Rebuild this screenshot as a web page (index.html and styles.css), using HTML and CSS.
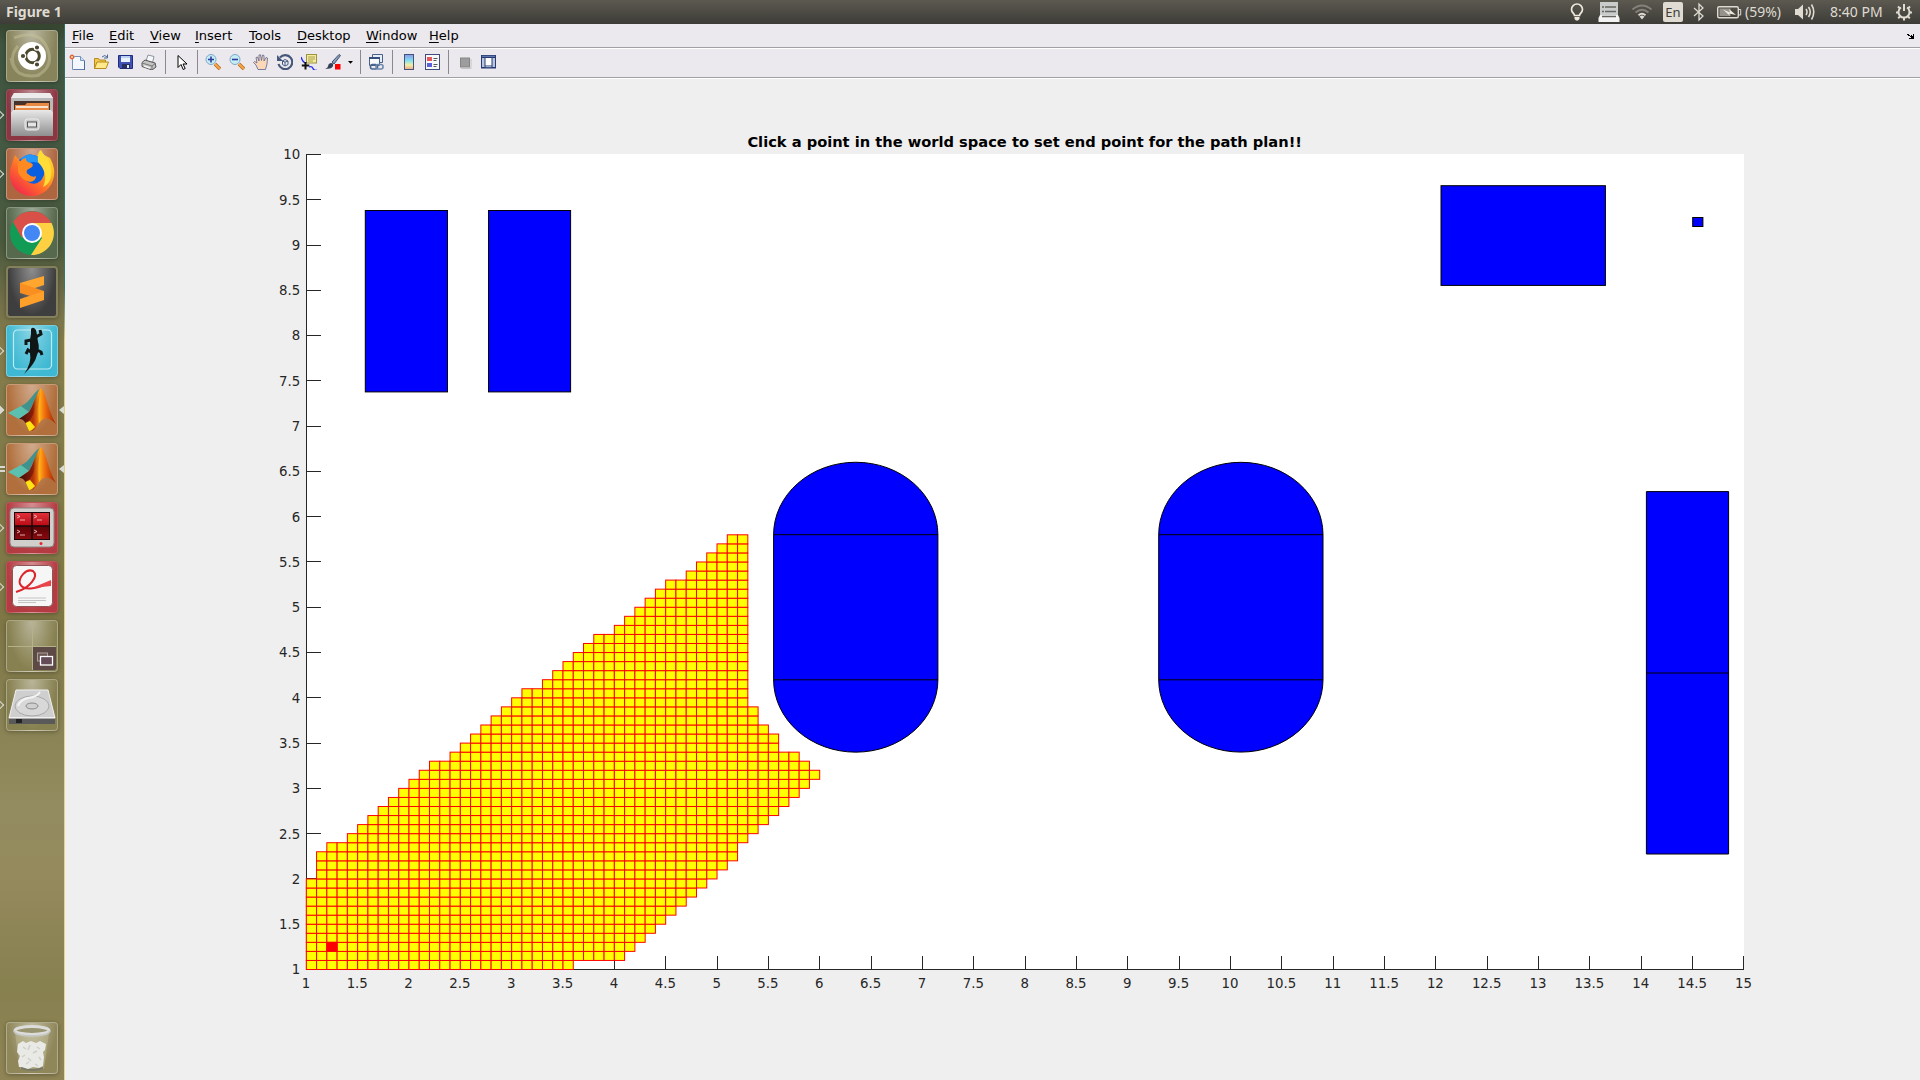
FILE: index.html
```html
<!DOCTYPE html>
<html lang="en">
<head>
<meta charset="utf-8">
<title>Figure 1</title>
<link rel="stylesheet" href="styles.css">
</head>
<body>
<svg class="defs" width="0" height="0" aria-hidden="true">
  <defs>
    <linearGradient id="steel" x1="0" y1="0" x2="0" y2="1"><stop offset="0" stop-color="#e8e8e8"/><stop offset="1" stop-color="#8f8f8f"/></linearGradient>
    <linearGradient id="ffx" x1="1" y1="0" x2="0.2" y2="1"><stop offset="0" stop-color="#fff04a"/><stop offset=".35" stop-color="#ffb21f"/><stop offset=".65" stop-color="#ff6a2a"/><stop offset="1" stop-color="#f0244f"/></linearGradient>
    <linearGradient id="flame" x1="0" y1="0" x2="1" y2="0"><stop offset="0" stop-color="#3a0d0a"/><stop offset=".38" stop-color="#8c1e08"/><stop offset=".55" stop-color="#ffb21a"/><stop offset=".68" stop-color="#f4740e"/><stop offset="1" stop-color="#9c1d06"/></linearGradient>
    <linearGradient id="cbar" x1="0" y1="0" x2="0" y2="1"><stop offset="0" stop-color="#8b97e8"/><stop offset=".4" stop-color="#82dff0"/><stop offset=".7" stop-color="#f3f0a0"/><stop offset="1" stop-color="#f0a58c"/></linearGradient>
    <linearGradient id="redscreen" x1="0" y1="0" x2="0" y2="1"><stop offset="0" stop-color="#e0303a"/><stop offset=".5" stop-color="#b80a12"/><stop offset=".52" stop-color="#5a0206"/><stop offset="1" stop-color="#870a0e"/></linearGradient>
    <symbol id="matlab" viewBox="0 0 52 52">
      <path d="M2 29 15 22 23 28 13 35Z" fill="#5cc0b0"/>
      <path d="M15 22C24 19 27 8 34 5L23 28Z" fill="#3f938f"/>
      <path d="M13 35 23 28C27 22 31 7 35 4 40 8 42 27 50 40 41 31 36 34 32 41 29 46 26 47 23 47 21 41 18 34 13 35Z" fill="url(#flame)"/>
      <path d="M34 5C31 20 29 29 24 36L20 38C23 43 22 46 24 47 28 47 31 43 33 39 29 28 34 17 34 5Z" fill="#e8520b" opacity=".45"/>
      <path d="M19.500 39 24 37 29 43C26 46 25 47 23 47Z" fill="#ffe414"/>
    </symbol>
  </defs>
</svg>

<header class="topbar">
  <span class="topbar-title">Figure 1</span>
  <div class="indicators">
    <svg class="ind w20" viewBox="0 0 20 24"><path d="M7.500 15.500C7.500 13.500 4.500 12.500 4.500 9.500A5.500 5.500 0 0 1 15.500 9.500C15.500 12.500 12.500 13.500 12.500 15.500Z" fill="none" stroke="#eee9dc" stroke-width="1.700"/><path d="M7.500 17h5v2l-1.500 1.500h-2L7.500 19Z" fill="#eee9dc"/></svg>
    <svg class="ind w24" viewBox="0 0 24 24"><path d="M3 2h18v13H3Z" fill="#c9cccb"/><path d="M3 15h18l1.500 3v4h-21v-4Z" fill="#f2f3f2"/><path d="M5 7h2M5 11.500h2M8 7h11M8 11.500h11M5 16.500h14" stroke="#65645f" stroke-width="1.300"/></svg>
    <svg class="ind w22" viewBox="0 0 22 24" fill="none" stroke-width="1.800"><path d="M1.500 9.500Q11 1.500 20.500 9.500M4.500 12.500Q11 7 17.500 12.500" stroke="#85827a"/><path d="M7.500 15.200Q11 12.300 14.500 15.200" stroke="#dfdbd2"/><path d="M8.500 16.500Q11 14.500 13.500 16.500L11 19.500Z" fill="#dfdbd2"/></svg>
    <span class="lang">En</span>
    <svg class="ind w18" viewBox="0 0 18 24"><path d="M4 8 13 16 9 20V4L13 8 4 16" fill="none" stroke="#dfdbd2" stroke-width="1.300"/></svg>
    <svg class="ind w26" viewBox="0 0 26 24"><rect x="1.700" y="6.700" width="20.600" height="11" rx="1.500" fill="none" stroke="#dfdbd2" stroke-width="1.400"/><path d="M23 9.500h1.700v5.500H23" fill="none" stroke="#dfdbd2"/><rect x="3.500" y="8.500" width="11" height="7.500" fill="#96938c"/><path d="M7 9.500 14 12.500 13 9 20 15 13 13.500 14 16Z" fill="#eeeadf"/></svg>
    <span class="battery">(59%)</span>
    <svg class="ind w22" viewBox="0 0 22 24"><path d="M1 9h3l5-4.500v15L4 15H1Z" fill="#dfdbd2"/><path d="M12 9q2 3 0 6M14.500 7q3.500 5 0 10M17.500 4.500q4.500 7.500 0 15" fill="none" stroke="#dfdbd2" stroke-width="1.600"/></svg>
    <span class="clock">8:40 PM</span>
    <svg class="ind w20" viewBox="0 0 20 24"><path d="M7 7.500A5.500 5.500 0 1 0 13 7.500" fill="none" stroke="#dfdbd2" stroke-width="2"/><path d="M10 4v7M2 12.500h2.500M15.500 12.500H18M4.200 18.300 6 16.500M15.800 18.300 14 16.500M10 18v2.500M4 6.500 6 8.500M16 6.500 14 8.500" stroke="#dfdbd2" stroke-width="2"/></svg>
  </div>
</header>

<div class="desktop">
  <nav class="launcher">
    <div class="tile dash">
      <svg viewBox="0 0 52 52"><path d="M8 8Q34-2 42 20 48 38 30 46M5 28Q8 50 34 45M14 44Q0 30 12 16" fill="none" stroke="#c9c69b" stroke-width="3" opacity=".45"/><circle cx="26" cy="26" r="14" fill="#fff"/><circle cx="26.500" cy="26" r="6.800" fill="none" stroke="#4b4a31" stroke-width="3"/><g stroke="#fff" stroke-width="1.200" fill="#4b4a31"><circle cx="17" cy="26" r="2.700"/><circle cx="31" cy="17.500" r="2.700"/><circle cx="31" cy="34.500" r="2.700"/></g></svg>
    </div>
    <div class="tile files">
      <i class="pip"></i>
      <svg viewBox="0 0 52 52"><path d="M8 4h36l3 5v38H5V9Z" fill="#b9b9b9"/><path d="M8 4h36l3 5H5Z" fill="#ececec"/><path d="M8 12h36v10H8Z" fill="#45332b"/><path d="M9 16h10l2-2h22v8H9Z" fill="#e98a44"/><path d="M10 18h32" stroke="#fff" stroke-width="1.500"/><path d="M7 21h38l2 3v23H5V24Z" fill="url(#steel)"/><rect x="19" y="30" width="14" height="11" rx="2.500" fill="#c9c9c9" stroke="#eee"/><rect x="21.500" y="33" width="9" height="5" fill="#e6e6e6" stroke="#555"/></svg>
    </div>
    <div class="tile firefox">
      <i class="pip"></i>
      <svg viewBox="0 0 52 52"><path d="M9 7C11 10 13 12 15 12L32 14 31 8 34 2 38 7 44 10C47 16 49 21 48 28 46 40 37 48 26 48 12 48 3 37 4 24 5 17 7 13 9 7Z" fill="url(#ffx)"/><path d="M13 12Q24 2 34 10 40 17 38 27 34 38 24 35 17 32 18 24 20 18 13 12Z" fill="#0a5fe0"/><path d="M14 11Q23 3 32 9L36 17Q29 12 23 15Z" fill="#2497f8"/><path d="M12 16Q15 11 20 10 19 14 25 15 28 16 26 19L21 22Q20 25 22 26 26 30 30 28 30 33 24 34 15 32 12 24Z" fill="#ff8a22"/><path d="M35 2C38 9 43 9 45 20 47 31 42 37 37 39 42 29 38 20 32 14Q31 7 35 2Z" fill="#ffdc38"/></svg>
    </div>
    <div class="tile chrome">
      <svg viewBox="0 0 52 52"><circle cx="26" cy="26" r="22" fill="#129b55"/><path d="M7 15A22 22 0 0 1 45.500 16H26L16 31Z" fill="#d95048"/><path d="M26 16H45.500A22 22 0 0 1 25 48L36 31Z" fill="#ffd041"/><circle cx="26" cy="26" r="10" fill="#fff"/><circle cx="26" cy="26" r="8" fill="#4387f5"/></svg>
    </div>
    <div class="tile sublime">
      <svg viewBox="0 0 52 52"><path d="M14 17 38 10v9l-24 8Z" fill="#ffa62f"/><path d="M14 17 38 25v9L14 27Z" fill="#f98f20"/><path d="M14 33 38 25v9L14 42Z" fill="#ffa02a"/></svg>
    </div>
    <div class="tile lizard">
      <i class="pip"></i>
      <svg viewBox="0 0 52 52"><rect x="7.500" y="5" width="38" height="39" rx="4" fill="none" stroke="#bdebf3" stroke-width="1.200"/><path d="M25 4Q27 1 30 5L31 10 32 17Q34 23 31 30 29 39 18 49 26 38 24 28L24 15 25 9Z" fill="#101616"/><path d="M30 12 35 9 34 5M25 15 20 16 20 20M31 25 35 27 36 30M25 27 22 25 20 29" fill="none" stroke="#101616" stroke-width="3"/></svg>
    </div>
    <div class="tile matlab"><i class="pip solid"></i><svg viewBox="0 0 52 52"><use href="#matlab"/></svg><i class="focus"></i></div>
    <div class="tile matlab"><i class="pip double"></i><svg viewBox="0 0 52 52"><use href="#matlab"/></svg><i class="focus"></i></div>
    <div class="tile terminal">
      <i class="pip"></i>
      <svg viewBox="0 0 52 52"><rect x="4" y="6" width="44" height="39" rx="4" fill="#d0cfcb" stroke="#858380"/><rect x="8" y="10" width="36" height="28" fill="#16080a"/><rect x="9" y="11" width="34" height="26" fill="url(#redscreen)"/><path d="M26 11v26M9 24h34" stroke="#18090a" stroke-width="1.500"/><path d="M11 13l3 1.500-3 1.500M14 18h5M28 13l3 1.500-3 1.500M31 18h5M11 28l3 1.500-3 1.500M14 33h5M28 28l3 1.500-3 1.500M31 33h5" fill="none" stroke="#f2cfcf" stroke-width=".8"/><circle cx="35" cy="41.500" r="1.500" fill="#e4272d"/></svg>
    </div>
    <div class="tile reader">
      <i class="pip"></i>
      <svg viewBox="0 0 52 52"><rect x="6.500" y="4.500" width="40" height="41" rx="4" fill="#f6f6f6" stroke="#8d5555"/><path d="M10 31C24 27 33 15 27 10 20 7 12 17 14 23 18 31 33 27 45 21" fill="none" stroke="#dc242c" stroke-width="2"/><path d="M26 27 45 19v6Z" fill="#e9444b"/><path d="M12 37h28M12 39.500h28M12 41.500h18" stroke="#c4c4c4"/></svg>
    </div>
    <div class="tile spaces">
      <svg viewBox="0 0 52 52"><path d="M27 27h23v21q0 2-2 2H27Z" fill="#5d4a46"/><path d="M2 26.500h48M26.500 2v48" stroke="#b5b189"/><rect x="31.500" y="33" width="10" height="8" fill="#6b5551" stroke="#aaa19b"/><rect x="34.500" y="36.500" width="12" height="8.500" fill="#644b58" stroke="#fff" stroke-width="1.300"/></svg>
    </div>
    <div class="tile disk">
      <i class="pip"></i>
      <svg viewBox="0 0 52 52"><path d="M10 11h32l7 28H3Z" fill="#cfcfcf" stroke="#f2f2f2"/><path d="M3 39h46v6H3Z" fill="#595959"/><path d="M3 39h46" stroke="#fff"/><path d="M10 40h6v4h-6Z" fill="#222"/><ellipse cx="26" cy="27" rx="17" ry="10" fill="#d8d8d8" stroke="#aaa"/><ellipse cx="26" cy="27" rx="6" ry="3" fill="#d0d0d0" stroke="#888"/><path d="M34 13Q31 18 22 19 14 21 12 27" fill="none" stroke="#f4f4f4" stroke-width="2"/></svg>
    </div>
    <div class="tile trash">
      <svg viewBox="0 0 52 52"><path d="M9 11h34l-5 36H14Z" fill="#d9d6b4" opacity=".3"/><path d="M15 46q11 4 22 0" stroke="#777867" stroke-width="2" fill="none"/><path d="M12 22l5-3 3 2 5-2 5 2 4-2 6 3-1 6-2 2 1 5-1 9-4 2-6-1-5 2-6-2-3 0-1-6 2-5-3-4Z" fill="#e9e9e5"/><path d="M17 25l3 2M24 23l-2 5M31 25l3 2M27 31l4-2M16 35l3-2M22 36l3 3M33 35l2 3M20 42l3-2M29 42l3 2" fill="none" stroke="#cfcfca" stroke-width="1.500"/><ellipse cx="26" cy="8.500" rx="17" ry="4" fill="#98946f" stroke="#dcdcda" stroke-width="3"/><path d="M8 9q2 5 18 5t18-5" fill="none" stroke="#c5c5c2" stroke-width="2"/></svg>
    </div>
  </nav>

  <main class="window">
    <div class="menubar">
      <span><u>F</u>ile</span><span><u>E</u>dit</span><span><u>V</u>iew</span><span><u>I</u>nsert</span><span><u>T</u>ools</span><span><u>D</u>esktop</span><span><u>W</u>indow</span><span><u>H</u>elp</span>
      <svg class="dock-arrow" viewBox="0 0 7 5" shape-rendering="crispEdges"><path d="M0 0h2v1h1v1h1v-1h1v1h1V0h1v5H2V4h2V3H3V2H1V1H0Z"/></svg>
    </div>
    <div class="toolbar">
      <svg class="tool" viewBox="0 0 16 16"><path d="M3.500 2.500h8l4 4v9h-12Z" fill="#f2f8fe" stroke="#7793bb"/><path d="M11.500 2.500v4h4" fill="#cfdff2" stroke="#7793bb"/><path d="M15.500 7v9H5" fill="none" stroke="#4d6b98"/><path d="M3 0v6M0 3h6M1 1l4 4M5 1 1 5" stroke="#e08a6a"/><circle cx="3" cy="3" r="1.500" fill="#fff0b8" stroke="#d8542a"/></svg>
      <svg class="tool" viewBox="0 0 16 16"><path d="M1.500 14.500v-10h4l1 1.500h6v8.500Z" fill="#f3c84b" stroke="#b58a20"/><path d="M1.500 14.500 4 8h11.500L13 14.500Z" fill="#ffe98a" stroke="#b58a20"/><path d="M9 3q3-3 5 0M14.500.5V4H11" fill="none" stroke="#456a95"/></svg>
      <svg class="tool" viewBox="0 0 16 16"><path d="M1.500 1.500h14v13H3l-1.500-1.500Z" fill="#4053b5" stroke="#202c80"/><path d="M4 2h9v6H4Z" fill="#e9f2fc"/><path d="M4 2h9v2H4Z" fill="#bcd0f0"/><path d="M5 10h8v4.500H5Z" fill="#26305c"/><path d="M10 11h2v3h-2Z" fill="#e8e8ef"/></svg>
      <svg class="tool" viewBox="0 0 16 16"><path d="M5 7 7 1l6 1.500-1.500 6Z" fill="#f6f9fc" stroke="#8c949c"/><path d="M1 8.500 4 6l10 3 1 4-4 3L1 12.500Z" fill="#c4c4c4" stroke="#555"/><path d="M1 9l10 3v3.500M11 12l4-3" fill="none" stroke="#777"/><path d="M3 12l6 2" stroke="#f4f4f4" stroke-width="1.500"/></svg>
      <i class="sep"></i>
      <svg class="tool" viewBox="0 0 16 16"><path d="M5 1.500v12l3-3 2.200 5 2-1-2.200-4.500h4Z" fill="#fff" stroke="#000"/></svg>
      <i class="sep"></i>
      <svg class="tool" viewBox="0 0 16 16"><path d="M10 10l5 5" stroke="#b7651c" stroke-width="3.500"/><path d="M10 10l5 5" stroke="#f5a848" stroke-width="2"/><circle cx="6" cy="5.500" r="5" fill="#c4edf6" stroke="#7fa7c9"/><path d="M3 5.500h6M6 2.500v6" stroke="#2e3c9c" stroke-width="1.600"/></svg>
      <svg class="tool" viewBox="0 0 16 16"><path d="M10 10l5 5" stroke="#b7651c" stroke-width="3.500"/><path d="M10 10l5 5" stroke="#f5a848" stroke-width="2"/><circle cx="6" cy="5.500" r="5" fill="#c4edf6" stroke="#7fa7c9"/><path d="M3 5.500h6" stroke="#2e3c9c" stroke-width="1.600"/></svg>
      <svg class="tool" viewBox="0 0 16 16"><path d="M5 15.500 3 11 .5 8.500 1.500 7.500 4 9 3 3.500 4.500 3 6 7 6 1 7.500.8 8.500 6.500 9.500 1 11 1.500 11 7 13 3.500 14.500 4 14 10 12.500 15.500Z" fill="#fbd9b8" stroke="#5a6390" stroke-width=".8"/></svg>
      <svg class="tool" viewBox="0 0 16 16"><path d="M3 3.500A7 7 0 1 1 1.500 10" fill="none" stroke="#45587c" stroke-width="2.200"/><path d="M0 1v6h6Z" fill="#45587c"/><path d="M5.500 7 8 5.500 11 7v3.500L8 12 5.500 10.500ZM5.500 7 8 8.200 11 7M8 8.200V12" fill="#edf1f8" stroke="#45587c"/></svg>
      <svg class="tool" viewBox="0 0 16 16"><rect x="5.500" y=".5" width="10" height="8.500" fill="#f4eb9d" stroke="#9c9340"/><path d="M7 3h7M7 5h7M7 7h5" stroke="#a9a052"/><path d="M0 3q1 4 4 6M8 13q3-1 4 1.500t4 1.500" fill="none" stroke="#1c26ee" stroke-width="1.200"/><path d="M4.500 8v7.500M.8 11.500h7.500" stroke="#111" stroke-width="2"/></svg>
      <svg class="tool" viewBox="0 0 16 16"><path d="M7 8 14 .5l1.500 1L9 10Z" fill="#8ba0c0" stroke="#41536e"/><path d="M0 15q3-1 3.500-4.500Q5 8 8 9.500 9 13 5 14.500Z" fill="#334058"/><rect x="10" y="10" width="5.500" height="5.500" fill="#f00"/></svg>
      <svg class="caret" viewBox="0 0 11 16"><path d="M3 7h5L5.500 9.700Z"/></svg>
      <i class="sep"></i>
      <svg class="tool" viewBox="0 0 16 16"><path d="M4.500.500h10v8h-10Z" fill="#e6edf6" stroke="#4b6288"/><path d="M1.500 3.500h10v8h-10Z" fill="#f8fafc" stroke="#4b6288"/><path d="M1 3h11v2H1Z" fill="#35507d"/><rect x="2.500" y="10.500" width="7" height="4.500" rx="2" fill="none" stroke="#49658e" stroke-width="1.600"/><rect x="8" y="10.500" width="7" height="4.500" rx="2" fill="none" stroke="#6e88ad" stroke-width="1.600"/></svg>
      <i class="sep"></i>
      <svg class="tool" viewBox="0 0 16 16"><rect x="4.500" y=".5" width="9" height="15" fill="url(#cbar)" stroke="#42547a"/></svg>
      <svg class="tool" viewBox="0 0 16 16"><rect x="1.500" y=".5" width="14" height="15" fill="#f7f8fc" stroke="#3e4c79"/><rect x="3" y="3" width="5" height="4" fill="#e9575c"/><rect x="3" y="9" width="5" height="4" fill="#5960de"/><path d="M9.500 4.500h4M9.500 6.500h3M9.500 10.500h4M9.500 12.500h3" stroke="#555"/></svg>
      <i class="sep"></i>
      <svg class="tool" viewBox="0 0 16 16"><rect x="4.500" y="4" width="9" height="9" fill="#9d9d9d" stroke="#858585"/><path d="M5 14.500h10V5" fill="none" stroke="#c4c4c4"/></svg>
      <svg class="tool" viewBox="0 0 16 16"><rect x="1" y="1" width="15" height="13.500" fill="#263b73"/><path d="M2 4h2.500v9H2ZM12.500 4H15v9h-2.500Z" fill="#b9c6dd"/><rect x="5.500" y="4" width="6" height="7.500" fill="#fff"/><path d="M2 2.300h13" stroke="#6f87b8"/><path d="M5.500 12.700h6" stroke="#b9c6dd"/></svg>
    </div>
    <div class="figure">
      <svg id="axes" class="axes" width="1855" height="1001" viewBox="65 79 1855 1001">
        <rect x="306" y="154" width="1438" height="816" fill="#fff"/>
        <text class="title" x="1024.700" y="146.500" text-anchor="middle">Click a point in the world space to set end point for the path plan!!</text>
        <g id="rulers" class="rulers"></g>
        <g id="cells" class="cells"></g>
        <g class="obstacles">
          <rect x="365.300" y="210.500" width="82.200" height="181.400"/>
          <rect x="488.500" y="210.500" width="82.100" height="181.400"/>
          <rect x="1441" y="185.700" width="164.400" height="99.700"/>
          <rect x="1692.700" y="217.500" width="10.200" height="9"/>
          <path d="M773.600 534.700a82.150 72.450 0 0 1 164.300 0v145a82.150 72.450 0 0 1-164.300 0ZM773.600 534.700h164.300M773.600 679.800h164.300"/>
          <path d="M1158.700 534.700a82.150 72.450 0 0 1 164.300 0v145a82.150 72.450 0 0 1-164.300 0ZM1158.700 534.700h164.300M1158.700 679.800h164.300"/>
          <path d="M1646.400 491.600h82.200v362.400h-82.200ZM1646.400 673h82.200"/>
        </g>
      </svg>
    </div>
  </main>
</div>
<script src="plot.js"></script>
</body>
</html>
```
FILE: styles.css
```css
* { box-sizing: border-box; }

body {
  margin: 0;
  width: 1920px;
  height: 1080px;
  overflow: hidden;
  display: flex;
  flex-direction: column;
  background: #efefef;
  font-family: "DejaVu Sans", sans-serif;
}

.defs { position: absolute; }

.topbar {
  flex: 0 0 24px;
  display: flex;
  justify-content: space-between;
  align-items: center;
  padding: 0 6px;
  background: linear-gradient(#5c5a50, #55534b 20%, #3d3c37);
  color: #dfdbd2;
  font-family: "Noto Sans", "Open Sans", sans-serif;
  font-size: 14px;
  line-height: 24px;
}
.topbar-title { font-weight: 700; font-size: 14px; }
.indicators { display: flex; align-items: center; height: 24px; }
.ind { height: 24px; display: block; }
.w18 { width: 18px; margin-right: 8px; }
.w20 { width: 20px; }
.w22 { width: 22px; margin-right: 10px; }
.w24 { width: 24px; margin: 0 10px 0 10px; }
.w26 { width: 26px; margin-right: 2px; }
.lang {
  width: 20px;
  height: 20px;
  margin-right: 7px;
  border-radius: 2px;
  background: #dfdbd2;
  color: #3d3c37;
  font-size: 13px;
  line-height: 20px;
  text-align: center;
}
.battery { width: 49px; margin-left: 1px; white-space: nowrap; }
.clock { width: 64px; margin-left: 4px; white-space: nowrap; }

.desktop { flex: 1; display: flex; min-height: 0; }

.launcher {
  flex: 0 0 65px;
  display: flex;
  flex-direction: column;
  gap: 7px;
  padding: 6px 6px 6px;
  border-right: 1px solid;
  border-image: linear-gradient(#2f6a62, #3c7468 25%, #e0cb84 30%, #e8d590) 1;
  background: linear-gradient(#35452f 0, #3f5540 20px, #465a43 150px, #4b5a3d 220px, #77724a 285px, #857c4c 320px, #7e7645 600px, #928c60 780px, #958a5e 850px, #87804f 960px, #8f8455 1056px);
}
.tile {
  flex: 0 0 52px;
  width: 52px;
  height: 52px;
  position: relative;
  border-radius: 4px;
  border: 1px solid rgba(255, 255, 255, .3);
  background-image: radial-gradient(ellipse at 50% 0, rgba(255, 255, 255, .42), rgba(255, 255, 255, 0) 70%);
  box-shadow: 0 1px 4px rgba(0, 0, 0, .3);
}
.tile svg { display: block; width: 52px; height: 52px; margin: -1px; }
.dash { background-color: #87835b; }
.files { background-color: #8c3642; border-color: rgba(255, 255, 255, .12); }
.firefox { background-color: #ae6640; }
.chrome { background-color: #57694d; }
.sublime { background-color: #3e3e3e; border: 2px solid #85805c; }
.sublime svg { margin: -2px; }
.lizard { background-color: #3fb9d3; }
.matlab { background-color: #b06f3c; }
.terminal, .reader { background-color: #b43b42; border-color: rgba(255, 255, 255, .12); }
.spaces, .disk { background-color: #878050; }
.trash { background-color: #8f875a; margin-top: auto; }

.pip {
  position: absolute;
  left: -10px;
  top: 22px;
  width: 6px;
  height: 6px;
  border: solid #d8d8d0;
  border-width: 1px 1px 0 0;
  transform: rotate(45deg);
}
.pip.solid { background: #d8d8d0; }
.pip.double {
  left: -7px;
  width: 5px;
  height: 6px;
  border-width: 2px 0;
  transform: none;
}
.focus {
  position: absolute;
  right: -7px;
  top: 21px;
  border: solid transparent;
  border-width: 4px 5px 4px 0;
  border-right-color: #dadad4;
}

.window { flex: 1; display: flex; flex-direction: column; min-width: 0; }

.menubar {
  flex: 0 0 25px;
  display: grid;
  grid-template-columns: 37px 41px 45px 54px 48px 69px 63px 1fr 7px;
  align-items: center;
  padding: 1px 6px 1px 7px;
  background: #ebe9ed;
  border-bottom: 1px solid #fff;
  box-shadow: inset 0 -1px #a2a0a4;
  color: #000;
  font-size: 13px;
  line-height: 22px;
}
.menubar u { text-decoration-thickness: 1px; text-underline-offset: 2px; }
.dock-arrow { width: 7px; height: 5px; }

.toolbar {
  flex: 0 0 30px;
  display: flex;
  align-items: center;
  padding-bottom: 3px;
  background: #ebe9ed;
  border-bottom: 1px solid #fff;
  box-shadow: inset 0 -1px #a2a0a4;
}
.tool { width: 16px; height: 16px; margin: 0 4px; flex: none; }
.sep { width: 1px; height: 24px; margin: 0 3px 0 4px; background: #8b898d; flex: none; }
.caret { width: 11px; height: 16px; flex: none; }

.figure { flex: 1; background: #efefef; min-height: 0; }
.axes { display: block; }
.axes text { font-family: "DejaVu Sans", sans-serif; }
.title { font-size: 14.65px; font-weight: 700; fill: #000; }
.rulers { font-size: 13.33px; fill: #262626; }
.rulers path { fill: none; stroke: #262626; stroke-width: 1; shape-rendering: crispEdges; }
.cells rect { fill: #ff0; stroke: #f00; stroke-width: 1; }
.cells .start { fill: #f00; }
.obstacles { fill: #00f; stroke: #000; stroke-width: 1; }
```
FILE: plot.js
```js
const NS = "http://www.w3.org/2000/svg";
const X0 = 306.3, Y0 = 969.5, SX = 102.68, SY = 90.56;
const px = v => X0 + (v - 1) * SX;
const py = v => Y0 - (v - 1) * SY;

function add(parent, name, attrs, text) {
  const el = document.createElementNS(NS, name);
  for (const key in attrs) el.setAttribute(key, attrs[key]);
  if (text !== undefined) el.textContent = text;
  parent.appendChild(el);
  return el;
}

const rulers = document.getElementById("rulers");
let d = "M306.5 154V969.5H1744";
for (let v = 1; v <= 15; v += 0.5) {
  const x = Math.floor(px(v)) + 0.5;
  d += `M${x} 956V969.5`;
  add(rulers, "text", { x: px(v) - 0.4, y: 988, "text-anchor": "middle" }, v);
}
for (let v = 1; v <= 10; v += 0.5) {
  const y = Math.floor(py(v)) + 0.5;
  d += `M306.5 ${y}H321`;
  add(rulers, "text", { x: 300.3, y: Math.round(py(v) + 4.9), "text-anchor": "end" }, v);
}
add(rulers, "path", { d });

// Explored cells, bottom row first: [first column, end column], 0.1 units each.
const rows = [
  [0, 26], [0, 31], [0, 32], [0, 33], [0, 34], [0, 35], [0, 36], [0, 37],
  [0, 38], [0, 39], [1, 40], [1, 41], [1, 42], [2, 42], [4, 43], [5, 44],
  [6, 45], [7, 46], [8, 47], [9, 48], [10, 49], [11, 50], [12, 49], [14, 48],
  [15, 46], [16, 46], [17, 45], [18, 44], [19, 44], [20, 43], [21, 43], [23, 43],
  [24, 43], [25, 43], [26, 43], [27, 43], [28, 43], [30, 43], [31, 43], [32, 43],
  [33, 43], [34, 43], [35, 43], [37, 43], [38, 43], [39, 43], [40, 43], [41, 43]
];
const cells = document.getElementById("cells");
const cell = (c, r, cls) => add(cells, "rect", {
  x: (X0 + c * SX / 10).toFixed(2), y: (Y0 - (r + 1) * SY / 10).toFixed(2),
  width: SX / 10, height: SY / 10, class: cls
});
rows.forEach(([from, to], r) => {
  for (let c = from; c < to; c++) cell(c, r, "open");
});
cell(2, 2, "start");
```
